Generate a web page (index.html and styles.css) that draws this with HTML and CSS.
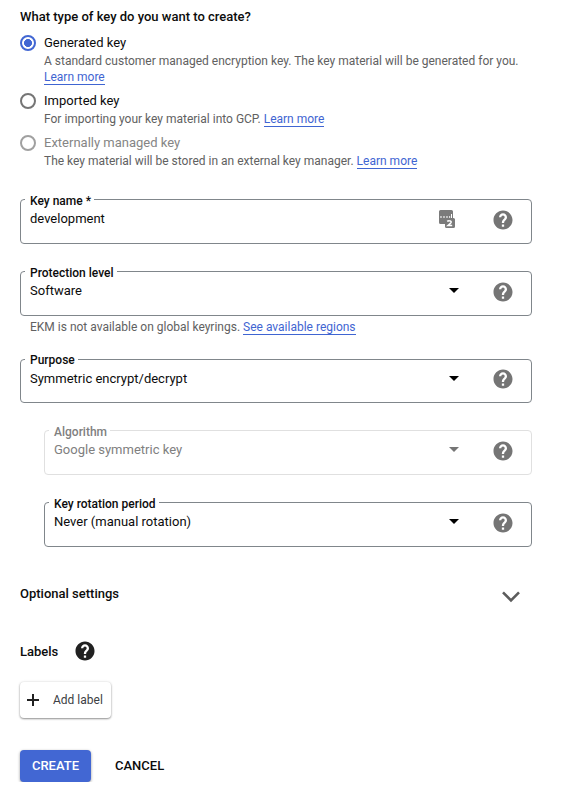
FILE: index.html
```html
<!DOCTYPE html>
<html lang="en">
<head>
<meta charset="utf-8">
<title>Create key</title>
<link rel="stylesheet" href="styles.css">
</head>
<body>
<svg class="defs" width="0" height="0">
  <symbol id="help" viewBox="1.500 1.500 21 21"><path fill-rule="evenodd" d="M12 2C6.480 2 2 6.480 2 12s4.480 10 10 10 10-4.480 10-10S17.520 2 12 2zm1.200 17.200h-2.400v-2.400h2.400v2.400zm2.100-7.700l-.9.920C13.600 13.200 13.200 13.600 13.200 15.200h-2.400v-.7c0-1.100.4-2.100 1.120-2.830l1.240-1.260c.37-.36.59-.86.59-1.410 0-1-.8-1.750-1.750-1.750S10.250 8 10.250 9H7.800c0-2.320 1.880-4.200 4.200-4.200s4.200 1.880 4.200 4.200c0 .98-.3 1.900-.9 2.500z"/></symbol>
  <symbol id="arrow" viewBox="0 0 10 5"><path d="M0 0h10L5 5z"/></symbol>
</svg>
<main class="form">
  <h2 class="title">What type of key do you want to create?</h2>
  <div class="option tall">
    <span class="radio checked"></span>
    <div><div class="name">Generated key</div>
    <p class="hint">A standard customer managed encryption key. The key material will be generated for you. <a href="#">Learn more</a></p></div>
  </div>
  <div class="option">
    <span class="radio"></span>
    <div><div class="name">Imported key</div>
    <p class="hint">For importing your key material into GCP. <a href="#">Learn more</a></p></div>
  </div>
  <div class="option disabled">
    <span class="radio"></span>
    <div><div class="name">Externally managed key</div>
    <p class="hint">The key material will be stored in an external key manager. <a href="#">Learn more</a></p></div>
  </div>

  <div class="field key-name">
    <span class="label">Key name *</span>
    <span class="value">development</span>
    <svg class="manager" width="16" height="18" viewBox="0 0 16 18"><path fill="#7b7b7b" d="M1.500 0h11A1.500 1.500 0 0 1 14 1.500V8h.5A1.500 1.500 0 0 1 16 9.500v7a1.500 1.500 0 0 1-1.500 1.500h-7A1.500 1.500 0 0 1 6 16.500V14H1.500A1.500 1.500 0 0 1 0 12.500v-11A1.500 1.500 0 0 1 1.500 0z"/><path fill="#fff" d="M1.300 6.200h1.400v1.500H1.300zM4.300 6.200h1.400v1.500H4.300zM7.300 6.200h1.400v1.500H7.300zM10 6.200h1.200v1.500H10zM12 4h1v4h-1z"/><path fill="none" stroke="#fff" stroke-width="1.500" d="M8.200 11.400q.8-.8 2.200-.7c2.200.1 2.200 1.700 1 2.700L9 15.500h4.200"/></svg>
    <svg class="help"><use href="#help"/></svg>
  </div>
  <div class="field protection">
    <span class="label">Protection level</span>
    <span class="value">Software</span>
    <svg class="arrow"><use href="#arrow"/></svg>
    <svg class="help"><use href="#help"/></svg>
  </div>
  <p class="hint note">EKM is not available on global keyrings. <a href="#">See available regions</a></p>
  <div class="field purpose">
    <span class="label">Purpose</span>
    <span class="value">Symmetric encrypt/decrypt</span>
    <svg class="arrow"><use href="#arrow"/></svg>
    <svg class="help"><use href="#help"/></svg>
  </div>
  <div class="field nested inactive">
    <span class="label">Algorithm</span>
    <span class="value">Google symmetric key</span>
    <svg class="arrow"><use href="#arrow"/></svg>
    <svg class="help"><use href="#help"/></svg>
  </div>
  <div class="field nested">
    <span class="label">Key rotation period</span>
    <span class="value">Never (manual rotation)</span>
    <svg class="arrow"><use href="#arrow"/></svg>
    <svg class="help"><use href="#help"/></svg>
  </div>

  <div class="optional"><h3>Optional settings</h3>
    <svg width="18" height="12" viewBox="0 0 18 12" fill="none" stroke="#5c5c5c" stroke-width="2.600"><path d="M1 1.300l8 8 8-8"/></svg>
  </div>
  <div class="labels"><h3>Labels</h3><svg class="help"><use href="#help"/></svg></div>
  <button class="add"><svg width="12" height="12" viewBox="0 0 12 12"><path fill="#212121" d="M5 0h2v5h5v2H7v5H5V7H0V5h5z"/></svg><span>Add label</span></button>
  <div class="actions"><button class="create">CREATE</button><button class="cancel">CANCEL</button></div>
</main>
</body>
</html>
```
FILE: styles.css
```css
* { box-sizing: border-box; }
body { margin: 0; background: #fff; color: #0c0c0c; font: 400 13px/18px Roboto, sans-serif; }
.defs { display: block; }
.form { width: 532px; padding: 7px 0 0 20px; }
h2, h3, p { margin: 0; }
h2, h3 { font-size: 13px; font-weight: 500; line-height: 20px; }
.title { height: 26px; }
.option { display: flex; height: 42px; gap: 8px; }
.option.tall { height: 58px; }
.radio { flex: none; width: 16px; height: 16px; margin-top: 2px; border: 2px solid #757575; border-radius: 50%; }
.radio.checked { border-color: #4267d3; background: radial-gradient(circle, #4267d3 3.700px, #fff 4.300px); }
.disabled .radio { border-color: #a0a0a0; }
.name { height: 20px; line-height: 20px; }
.disabled .name { color: #858585; }
.hint { font-size: 12px; line-height: 16px; color: #616161; }
.hint a { color: #3f65d2; text-decoration: none; border-bottom: 1px solid #3f65d2; }
.field { position: relative; display: flex; height: 45px; border: 1px solid #80868b; border-radius: 4px; padding-left: 9px; }
.key-name { margin-top: 24px; }
.protection { margin-top: 27px; }
.note { margin: 3px 0 0 10px; height: 16px; }
.purpose { margin-top: 24px; height: 44px; }
.nested { margin: 27px 0 0 24px; }
.label { position: absolute; left: 4px; top: -7px; padding: 0 3px 0 5px; background: #fff; font-size: 12px; font-weight: 500; line-height: 16px; }
.purpose .label { top: -8px; }
.value { flex: 1; padding-top: 10px; }
.help { flex: none; display: block; width: 20px; height: 20px; fill: #757575; }
.field .help { margin: 10px 18px 0 0; }
.purpose .help { margin-top: 9px; }
.arrow { flex: none; width: 10px; height: 5px; margin: 16px 34px 0 0; fill: #000; }
.manager { margin: 10px 38px 0 0; }
.inactive { border-color: #e0e0e0; color: #808080; }
.inactive .arrow { fill: #757575; }
.optional { display: flex; justify-content: space-between; height: 20px; margin-top: 37px; }
.optional svg { margin: 7px 12px 0 0; }
.labels { display: flex; align-items: center; gap: 17px; height: 20px; margin-top: 37px; }
.labels h3 { padding-top: 1px; }
.labels .help { fill: #212121; }
button { border: 0; font-family: inherit; color: inherit; }
.add { display: flex; align-items: center; gap: 14px; width: 91px; height: 36px; margin-top: 21px; padding: 0 0 0 7px; background: #fff; border-radius: 4px; box-shadow: 0 1px 2px rgba(0,0,0,.4), 0 0 3px rgba(0,0,0,.12); font-size: 12px; color: #3c4043; }
.actions { display: flex; height: 32px; margin-top: 32px; }
.create, .cancel { font-size: 13px; font-weight: 500; padding: 0 0 2px; }
.create { width: 71px; border-radius: 4px; background: #4267d3; color: #fff; box-shadow: 0 1px 3px rgba(0,0,0,.4); }
.cancel { margin-left: 24px; background: transparent; }
```
